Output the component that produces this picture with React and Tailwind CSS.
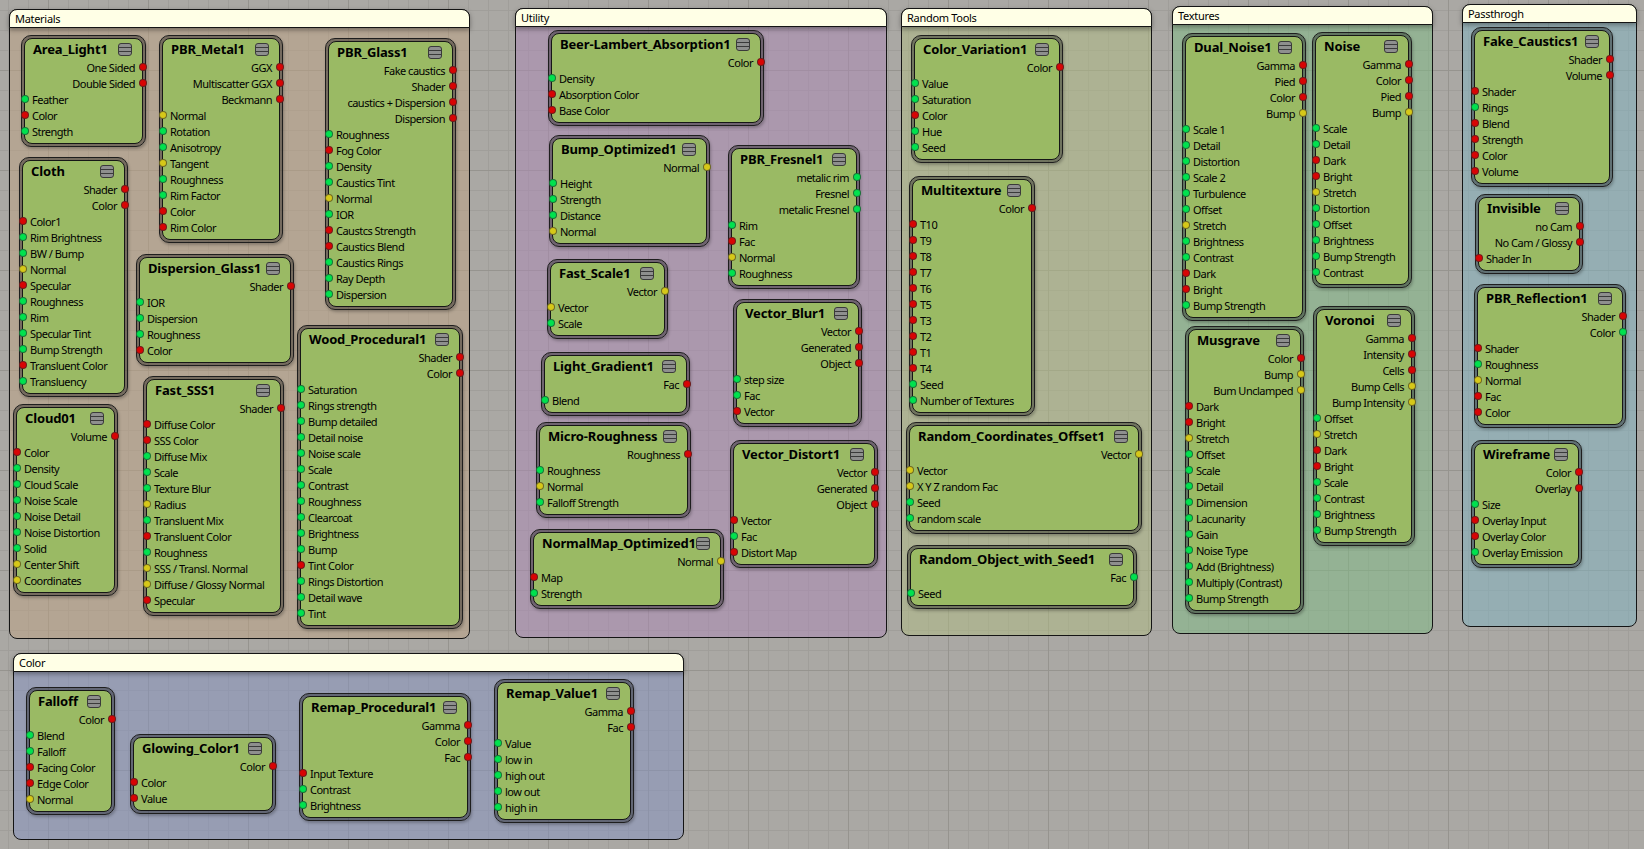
import React from 'react';

// port strings are "<color> <label>": r = colour/shader, g = value, y = vector
const PORT_COLORS = {
  r: 'bg-[#d80404]',
  g: 'bg-[#00e24e]',
  y: 'bg-[#d6c818]',
};

const GROUPS = [
  {
    title: 'Materials', x: 9, y: 9, w: 461, h: 630, tint: 'bg-[#bea182]/50',
    nodes: [
      { name: 'Area_Light1', x: 21, r: 146, y: 35, out: ['r One Sided', 'r Double Sided'], in: ['g Feather', 'r Color', 'g Strength'] },
      { name: 'PBR_Metal1', x: 159, r: 283, y: 35, out: ['r GGX', 'r Multiscatter GGX', 'r Beckmann'], in: ['y Normal', 'g Rotation', 'g Anisotropy', 'y Tangent', 'g Roughness', 'g Rim Factor', 'r Color', 'r Rim Color'] },
      { name: 'PBR_Glass1', x: 325, r: 456, y: 38, out: ['r Fake caustics', 'r Shader', 'r caustics + Dispersion', 'r Dispersion'], in: ['g Roughness', 'r Fog Color', 'g Density', 'g Caustics Tint', 'y Normal', 'g IOR', 'r Caustcs Strength', 'r Caustics Blend', 'g Caustics Rings', 'g Ray Depth', 'g Dispersion'] },
      { name: 'Cloth', x: 19, r: 128, y: 157, out: ['r Shader', 'r Color'], in: ['r Color1', 'g Rim Brightness', 'g BW / Bump', 'y Normal', 'r Specular', 'g Roughness', 'g Rim', 'g Specular Tint', 'g Bump Strength', 'r Transluent Color', 'g Transluency'] },
      { name: 'Dispersion_Glass1', x: 136, r: 294, y: 254, out: ['r Shader'], in: ['g IOR', 'g Dispersion', 'g Roughness', 'r Color'] },
      { name: 'Wood_Procedural1', x: 297, r: 463, y: 325, out: ['r Shader', 'r Color'], in: ['g Saturation', 'g Rings strength', 'g Bump detailed', 'g Detail noise', 'g Noise scale', 'g Scale', 'g Contrast', 'g Roughness', 'g Clearcoat', 'g Brightness', 'g Bump', 'r Tint Color', 'g Rings Distortion', 'g Detail wave', 'g Tint'] },
      { name: 'Fast_SSS1', x: 143, r: 284, y: 376, out: ['r Shader'], in: ['r Diffuse Color', 'r SSS Color', 'g Diffuse Mix', 'g Scale', 'g Texture Blur', 'y Radius', 'g Transluent Mix', 'r Transluent Color', 'g Roughness', 'y SSS / Transl. Normal', 'y Diffuse / Glossy Normal', 'r Specular'] },
      { name: 'Cloud01', x: 13, r: 118, y: 404, out: ['r Volume'], in: ['r Color', 'g Density', 'g Cloud Scale', 'g Noise Scale', 'g Noise Detail', 'g Noise Distortion', 'g Solid', 'y Center Shift', 'y Coordinates'] },
    ],
  },
  {
    title: 'Utility', x: 515, y: 8, w: 372, h: 630, tint: 'bg-[#ac87b6]/50',
    nodes: [
      { name: 'Beer-Lambert_Absorption1', x: 548, r: 764, y: 30, out: ['r Color'], in: ['g Density', 'r Absorption Color', 'r Base Color'] },
      { name: 'Bump_Optimized1', x: 549, r: 710, y: 135, out: ['y Normal'], in: ['g Height', 'g Strength', 'g Distance', 'y Normal'] },
      { name: 'PBR_Fresnel1', x: 728, r: 860, y: 145, out: ['g metalic rim', 'g Fresnel', 'g metalic Fresnel'], in: ['g Rim', 'r Fac', 'y Normal', 'g Roughness'] },
      { name: 'Fast_Scale1', x: 547, r: 668, y: 259, out: ['y Vector'], in: ['y Vector', 'g Scale'] },
      { name: 'Vector_Blur1', x: 733, r: 862, y: 299, out: ['r Vector', 'r Generated', 'r Object'], in: ['g step size', 'g Fac', 'r Vector'] },
      { name: 'Light_Gradient1', x: 541, r: 690, y: 352, out: ['r Fac'], in: ['g Blend'] },
      { name: 'Micro-Roughness', x: 536, r: 691, y: 422, out: ['r Roughness'], in: ['g Roughness', 'y Normal', 'g Falloff Strength'] },
      { name: 'Vector_Distort1', x: 730, r: 878, y: 440, out: ['r Vector', 'r Generated', 'r Object'], in: ['r Vector', 'g Fac', 'r Distort Map'] },
      { name: 'NormalMap_Optimized1', x: 530, r: 724, y: 529, out: ['y Normal'], in: ['r Map', 'g Strength'] },
    ],
  },
  {
    title: 'Random Tools', x: 901, y: 8, w: 251, h: 628, tint: 'bg-[#b0bb82]/50',
    nodes: [
      { name: 'Color_Variation1', x: 911, r: 1063, y: 35, out: ['r Color'], in: ['g Value', 'g Saturation', 'r Color', 'g Hue', 'g Seed'] },
      { name: 'Multitexture', x: 909, r: 1035, y: 176, out: ['r Color'], in: ['r T10', 'r T9', 'r T8', 'r T7', 'r T6', 'r T5', 'r T3', 'r T2', 'r T1', 'r T4', 'g Seed', 'g Number of Textures'] },
      { name: 'Random_Coordinates_Offset1', x: 906, r: 1142, y: 422, out: ['y Vector'], in: ['y Vector', 'y X Y Z random Fac', 'g Seed', 'g random scale'] },
      { name: 'Random_Object_with_Seed1', x: 907, r: 1137, y: 545, out: ['g Fac'], in: ['g Seed'] },
    ],
  },
  {
    title: 'Textures', x: 1172, y: 6, w: 261, h: 628, tint: 'bg-[#7ebb84]/50',
    nodes: [
      { name: 'Dual_Noise1', x: 1182, r: 1306, y: 33, out: ['r Gamma', 'r Pied', 'r Color', 'y Bump'], in: ['g Scale 1', 'g Detail', 'g Distortion', 'g Scale 2', 'g Turbulence', 'g Offset', 'y Stretch', 'g Brightness', 'g Contrast', 'r Dark', 'r Bright', 'g Bump Strength'] },
      { name: 'Noise', x: 1312, r: 1412, y: 32, out: ['r Gamma', 'r Color', 'r Pied', 'y Bump'], in: ['g Scale', 'g Detail', 'r Dark', 'r Bright', 'y Stretch', 'g Distortion', 'g Offset', 'g Brightness', 'g Bump Strength', 'g Contrast'] },
      { name: 'Musgrave', x: 1185, r: 1304, y: 326, out: ['r Color', 'y Bump', 'y Bum Unclamped'], in: ['r Dark', 'r Bright', 'y Stretch', 'g Offset', 'g Scale', 'g Detail', 'g Dimension', 'g Lacunarity', 'g Gain', 'g Noise Type', 'g Add (Brightness)', 'g Multiply (Contrast)', 'g Bump Strength'] },
      { name: 'Voronoi', x: 1313, r: 1415, y: 306, out: ['r Gamma', 'r Intensity', 'r Cells', 'y Bump Cells', 'y Bump Intensity'], in: ['g Offset', 'y Stretch', 'r Dark', 'r Bright', 'g Scale', 'g Contrast', 'g Brightness', 'g Bump Strength'] },
    ],
  },
  {
    title: 'Passthrogh', x: 1462, y: 4, w: 175, h: 623, tint: 'bg-[#80b3c2]/50',
    nodes: [
      { name: 'Fake_Caustics1', x: 1471, r: 1613, y: 27, out: ['r Shader', 'r Volume'], in: ['r Shader', 'g Rings', 'r Blend', 'r Strength', 'r Color', 'r Volume'] },
      { name: 'Invisible', x: 1475, r: 1583, y: 194, out: ['r no Cam', 'r No Cam / Glossy'], in: ['r Shader In'] },
      { name: 'PBR_Reflection1', x: 1474, r: 1626, y: 284, out: ['r Shader', 'g Color'], in: ['r Shader', 'g Roughness', 'y Normal', 'r Fac', 'r Color'] },
      { name: 'Wireframe', x: 1471, r: 1582, y: 440, out: ['r Color', 'r Overlay'], in: ['g Size', 'r Overlay Input', 'r Overlay Color', 'g Overlay Emission'] },
    ],
  },
  {
    title: 'Color', x: 13, y: 653, w: 671, h: 187, tint: 'bg-[#8491c2]/50',
    nodes: [
      { name: 'Falloff', x: 26, r: 115, y: 687, out: ['r Color'], in: ['g Blend', 'g Falloff', 'r Facing Color', 'r Edge Color', 'y Normal'] },
      { name: 'Glowing_Color1', x: 130, r: 276, y: 734, out: ['r Color'], in: ['r Color', 'r Value'] },
      { name: 'Remap_Procedural1', x: 299, r: 471, y: 693, out: ['r Gamma', 'r Color', 'r Fac'], in: ['r Input Texture', 'g Contrast', 'g Brightness'] },
      { name: 'Remap_Value1', x: 494, r: 634, y: 679, out: ['r Gamma', 'r Fac'], in: ['g Value', 'g low in', 'g high out', 'g low out', 'g high in'] },
    ],
  },
];

function splitPort(port) {
  return { color: port[0], label: port.slice(2) };
}

function MenuIcon() {
  return (
    <svg width="14" height="13" viewBox="0 0 14 13" className="shrink-0">
      <rect x="0.5" y="0.5" width="13" height="12" rx="2.5" fill="#8e8f8e" stroke="#3a3a3a" />
      <path d="M1 4.5H13M1 8.5H13" stroke="#3a3a3a" />
    </svg>
  );
}

function Port({ color, side }) {
  return (
    <span
      className={`absolute top-[4px] w-[8px] h-[8px] rounded-full border border-[#2a2a2a]/60 ${PORT_COLORS[color]} ${side === 'left' ? 'left-[-4.5px]' : 'right-[-4.5px]'}`}
    />
  );
}

function Node({ node, group }) {
  return (
    <div
      className="absolute rounded-[10px] border border-[#1e1e1e] bg-black/35 p-[2px] shadow-[1px_2px_3px_rgba(0,0,0,0.25)]"
      style={{ left: node.x - group.x - 1, top: node.y - group.y - 1, width: node.r - node.x }}
    >
      <div className="rounded-[8px] border border-[#161616] bg-[#9aba64] pb-[4px] text-[11px] tracking-[-0.5px] text-black whitespace-nowrap">
        <div className="h-[20px] pl-[8px] pr-[10px] flex items-center justify-between">
          <span className="text-[13px] font-bold tracking-[-0.15px] text-black leading-none">{node.name}</span>
          <MenuIcon />
        </div>
        {node.out.map(splitPort).map((p, i) => (
          <div key={`o${i}`} className="relative h-4 pt-[2px] pr-[7px] flex items-center justify-end">
            {p.label}
            <Port color={p.color} side="right" />
          </div>
        ))}
        {node.in.map(splitPort).map((p, i) => (
          <div key={`i${i}`} className="relative h-4 pt-[2px] pl-[7px] flex items-center">
            {p.label}
            <Port color={p.color} side="left" />
          </div>
        ))}
      </div>
    </div>
  );
}

function Group({ group }) {
  return (
    <div
      className={`absolute rounded-[8px] border border-[#141414] ${group.tint}`}
      style={{ left: group.x, top: group.y, width: group.w, height: group.h }}
    >
      <div className="h-[19px] -mx-px -mt-px pt-[2px] rounded-t-[8px] border border-[#141414] bg-[#ffffe6] pl-[5px] flex items-center text-[11px] tracking-[-0.3px] text-black shadow-[0_2px_5px_rgba(0,0,0,0.35)]">
        {group.title}
      </div>
      {group.nodes.map((n) => (
        <Node key={n.name} node={n} group={group} />
      ))}
    </div>
  );
}

export default function App() {
  return (
    <div
      className="relative w-[1644px] h-[849px] overflow-hidden bg-[#aaa8a4] bg-[linear-gradient(#96948f_1px,transparent_1px),linear-gradient(90deg,#96948f_1px,transparent_1px),linear-gradient(#a09e9a_1px,transparent_1px),linear-gradient(90deg,#a09e9a_1px,transparent_1px)] bg-[size:100px_100px,100px_100px,20px_20px,20px_20px] bg-[position:48px_70px,48px_70px,8px_10px,8px_10px]"
      style={{ fontFamily: '"Noto Sans", "Open Sans", sans-serif' }}
    >
      {GROUPS.map((g) => (
        <Group key={g.title} group={g} />
      ))}
    </div>
  );
}
